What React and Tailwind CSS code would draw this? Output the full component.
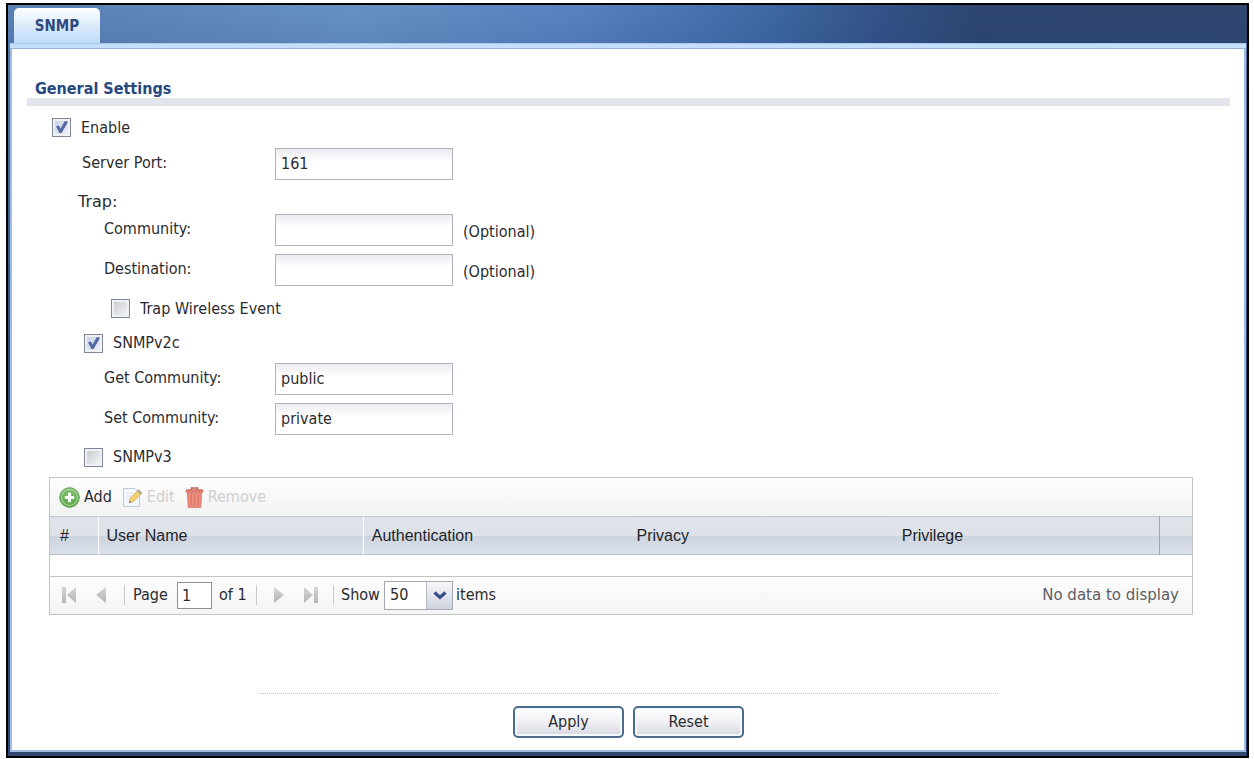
import React, { useId, useState } from "react";

const labelText = "font-['DejaVu_Sans_Condensed','DejaVu_Sans',sans-serif] [font-stretch:condensed]";

function Check({ label, defaultChecked = false, className = "" }) {
  const id = useId();
  const [on, setOn] = useState(defaultChecked);
  return (
    <div className={`flex items-center gap-[10px] ${className}`}>
      <span className="grid size-[19px] shrink-0">
        <input
          id={id}
          type="checkbox"
          checked={on}
          onChange={(e) => setOn(e.target.checked)}
          className="[grid-area:1/1] size-[19px] appearance-none border border-[#7f8798] bg-linear-to-br from-[#c4c6cc] to-[#fafafa] shadow-[inset_0_0_0_2px_#f0f1f4] checked:from-[#c3cbe0] checked:to-[#f2f5fc]"
        />
        {on && (
          <svg viewBox="0 0 19 19" className="pointer-events-none [grid-area:1/1] size-[19px]" fill="#5468a6" aria-hidden="true">
            <path d="M4 8.2 L6.8 7.4 L8.6 10.4 L12.6 3.2 L15.6 3.2 L15.2 5.6 L9.6 15 L7.4 15 Z" />
          </svg>
        )}
      </span>
      <label htmlFor={id}>{label}</label>
    </div>
  );
}

function Field({ label, defaultValue = "", note, className = "" }) {
  const id = useId();
  return (
    <div className={`flex h-10 items-center ${className}`}>
      <label htmlFor={id} className="flex-1 pb-[2px]">{label}</label>
      <input
        id={id}
        type="text"
        defaultValue={defaultValue}
        className="h-8 w-[178px] rounded-none border border-[#b1b3c0] bg-linear-to-b from-[#ebebf0] via-white via-40% to-white px-[5px] pb-[2px] outline-none"
      />
      <span className="w-[90px] pt-[3px] pl-[10px]">{note}</span>
    </div>
  );
}

function Sep() {
  return <span className="h-5 w-px shrink-0 bg-[#c9c9c6]" />;
}

function Pager({ kind, label, className = "" }) {
  const shapes = {
    first: <><rect x="1" y="1" width="4" height="16" /><path d="M15 1v16L6 9z" /></>,
    prev: <path d="M13 1v16L3 9z" />,
    next: <path d="M3 1v16l10-8z" />,
    last: <><path d="M1 1v16l9-8z" /><rect x="11" y="1" width="4" height="16" /></>,
  };
  return (
    <button type="button" aria-label={label} className={`shrink-0 ${className}`}>
      <svg width="16" height="18" viewBox="0 0 16 18" fill={`url(#pg-${kind})`}>
        <defs>
          <linearGradient id={`pg-${kind}`} x1="0" y1="0" x2="0" y2="1">
            <stop offset="0" stopColor="#d6d6d6" />
            <stop offset="1" stopColor="#b4b4b4" />
          </linearGradient>
        </defs>
        {shapes[kind]}
      </svg>
    </button>
  );
}

function AddIcon() {
  return (
    <svg width="21" height="21" viewBox="0 0 21 21" aria-hidden="true">
      <defs>
        <linearGradient id="add-g" x1="0" y1="0" x2="0" y2="1">
          <stop offset="0" stopColor="#86c173" />
          <stop offset="1" stopColor="#55a845" />
        </linearGradient>
      </defs>
      <circle cx="10.5" cy="10.5" r="9.8" fill="url(#add-g)" stroke="#5f9f56" />
      <circle cx="10.5" cy="10.5" r="8" fill="none" stroke="#b5dda8" strokeWidth="1" />
      <path d="M10.5 5.8v9.4M5.8 10.5h9.4" stroke="#fff" strokeWidth="3" />
    </svg>
  );
}

function EditIcon() {
  return (
    <svg width="21" height="21" viewBox="0 0 21 21" aria-hidden="true">
      <path d="M1.5 1.5h11l5 4v14h-16z" fill="#f5f9fd" stroke="#b9cbe0" />
      <path d="M4 6h7M4 9h5M4 12h4" stroke="#d3dfec" />
      <path d="M7 16l1.4-5L16.6 2.6l3.4 3.2-8.3 8.6z" fill="#f3d36b" stroke="#d0b069" strokeWidth=".8" />
      <path d="M15 4.2l3.4 3.2 1.6-1.6-3.4-3.2z" fill="#b5a9a4" />
      <path d="M7 16l.6-2.4 1.7 1.7z" fill="#8a7a66" />
    </svg>
  );
}

function TrashIcon() {
  return (
    <svg width="19" height="21" viewBox="0 0 19 21" aria-hidden="true">
      <path d="M6.5 3V1h6v2" fill="none" stroke="#c9625a" strokeWidth="1.6" />
      <rect x="1" y="2.6" width="17" height="3" rx="1" fill="#dd7a6f" stroke="#cc665c" strokeWidth=".6" />
      <path d="M2.4 6.2h14.2l-.8 14.2H3.2z" fill="#ee8d7e" stroke="#d8705f" strokeWidth=".8" />
      <path d="M6 8v10.5M9.5 8v10.5M13 8v10.5" stroke="#da7465" strokeWidth="1.2" />
    </svg>
  );
}

function FormButton({ children, type = "button" }) {
  return (
    <button
      type={type}
      className="h-8 w-[111px] rounded-[5px] border-2 border-[#4d6b8c] bg-linear-to-b from-white via-[#f0f0f4] via-50% to-[#d8d6df] shadow-[inset_0_0_0_2px_#f3fafd]"
    >
      {children}
    </button>
  );
}

const thBase = "px-2 text-left font-normal";

export default function App() {
  return (
    <div className={`min-h-screen bg-white pt-[3px] pr-[5px] pb-px pl-[6px] text-base leading-5 text-[#2b2b30] ${labelText}`}>
      <div className="border-2 border-black bg-linear-to-b from-[#5a80b5] from-0% to-[#2f4670] to-50% pr-px pb-1 pl-[2px]">
        <header className="-mr-px -ml-[2px] flex h-[38px] items-end bg-[linear-gradient(to_bottom,transparent,rgba(30,60,120,0.12)),linear-gradient(95deg,#5a80b6_0%,#6791c3_28%,#5882c0_46%,#4270aa_58%,#345389_70%,#2e466f_78%,#2f466f_100%)] pl-[6px]">
          <a
            href="#snmp"
            className="flex h-[35px] w-[86px] items-center justify-center rounded-t-[5px] bg-linear-to-b from-white via-[#dcebfb] via-50% to-[#bfdcf8] text-[15px] font-bold text-[#2b4a80]"
          >
            SNMP
          </a>
        </header>
        <main className="border-2 border-t-0 border-[#9dbde4] bg-white">
          <div className="-mx-[2px] h-[6px] border-y border-t-[#a9c8ea] border-b-[#94b4d6] bg-[#c3dff9]" />
          <form className="pt-[31px] pr-[14px] pb-3 pl-[15px]" onSubmit={(e) => e.preventDefault()}>
            <h1 className="border-b-8 border-[#e2e5ec] pl-2 leading-[18px] font-bold text-[#27477f]">General Settings</h1>

            <Check label="Enable" defaultChecked className="mt-[5px] h-[33px] pl-[25px]" />
            <div className="w-[516px]">
              <Field label="Server Port:" defaultValue="161" className="pl-[55px]" />
              <div className="h-[26px] pt-2 pl-[51px] font-['DejaVu_Sans',sans-serif] [font-stretch:normal]">Trap:</div>
              <Field label="Community:" note="(Optional)" className="pl-[77px]" />
              <Field label="Destination:" note="(Optional)" className="pl-[77px]" />
              <Check label="Trap Wireless Event" className="h-[37px] pl-[84px]" />
              <Check label="SNMPv2c" defaultChecked className="h-8 pl-[57px]" />
              <Field label="Get Community:" defaultValue="public" className="pl-[77px]" />
              <Field label="Set Community:" defaultValue="private" className="pl-[77px]" />
              <Check label="SNMPv3" className="h-[36px] pl-[57px]" />
            </div>

            <section className="mt-[2px] mr-[37px] ml-[22px] border border-[#c2c4c4]">
              <div className="flex h-[38px] items-center bg-linear-to-b from-[#fefefe] to-[#f3f2f2] pl-[9px]">
                <button type="button" className="flex items-center gap-1 pr-[10px]"><AddIcon />Add</button>
                <button type="button" disabled className="flex items-center gap-1 pr-[10px] text-[#cfcfcf]"><EditIcon />Edit</button>
                <button type="button" disabled className="flex items-center gap-1 text-[#cfcfcf]"><TrashIcon />Remove</button>
              </div>
              <table className="w-full table-fixed border-collapse">
                <thead>
                  <tr className="h-[38px] border-y border-t-[#c3c6ca] border-b-[#b9c1cb] bg-[linear-gradient(#dfe4ea_0%,#dde2e9_50%,#cdd5e0_51%,#dae0ea_100%)] font-['Liberation_Sans',Arial,sans-serif] text-base text-[#22242a]">
                    <th scope="col" className="w-12 px-[10px] text-left font-normal">#</th>
                    <th scope="col" className={`${thBase} border-l border-white`}>User Name</th>
                    <th scope="col" className={`${thBase} border-l border-white`}>Authentication</th>
                    <th scope="col" className={thBase}>Privacy</th>
                    <th scope="col" className={thBase}>Privilege</th>
                    <td className="w-[33px] border-l border-[#9aa5b5]" />
                  </tr>
                </thead>
                <tbody>
                  <tr className="h-[21px]"><td colSpan={6} /></tr>
                </tbody>
              </table>
              <div className="flex h-[38px] items-center border-t border-[#c2c4c4] bg-linear-to-b from-[#fdfdfd] to-[#f4f4f4] pl-[11px]">
                <Pager kind="first" label="First page" />
                <Pager kind="prev" label="Previous page" className="mr-[15px] ml-4" />
                <Sep />
                <label htmlFor="page" className="w-[52px] pl-2">Page</label>
                <input id="page" type="text" defaultValue="1" className="h-[27px] w-[35px] rounded-none border border-[#8e9099] bg-white px-1 outline-none" />
                <span className="w-11 pl-[7px] whitespace-nowrap">of 1</span>
                <Sep />
                <Pager kind="next" label="Next page" className="mr-4 ml-[14px]" />
                <Pager kind="last" label="Last page" className="mr-[14px]" />
                <Sep />
                <label htmlFor="size" className="w-[50px] pl-[7px]">Show</label>
                <span className="grid h-[29px] w-[69px] grid-cols-[1fr_26px] border border-[#a4a8b4]">
                  <select id="size" defaultValue="50" className="col-span-2 col-start-1 row-start-1 appearance-none bg-white px-[5px] outline-none">
                    <option>10</option>
                    <option>50</option>
                    <option>100</option>
                  </select>
                  <span className="pointer-events-none col-start-2 row-start-1 flex items-center justify-center border-l border-[#b3b8c4] bg-linear-to-b from-[#f6f7f9] to-[#cfd4de]">
                    <svg width="14" height="9" viewBox="0 0 14 9" fill="none" stroke="#3c4f8c" strokeWidth="3.2" aria-hidden="true">
                      <path d="M1.5 1.5 L7 6.3 L12.5 1.5" />
                    </svg>
                  </span>
                </span>
                <span className="pl-[3px]">items</span>
                <span className="ml-auto pr-[13px] font-['DejaVu_Sans',sans-serif] text-[15px] text-[#5e5e62] [font-stretch:normal]">No data to display</span>
              </div>
            </section>

            <div className="mx-auto mt-[78px] w-[739px] border-t border-dotted border-[#c0c0c4]" />
            <div className="mt-3 flex justify-center gap-[9px]">
              <FormButton type="submit">Apply</FormButton>
              <FormButton type="reset">Reset</FormButton>
            </div>
          </form>
        </main>
      </div>
    </div>
  );
}
